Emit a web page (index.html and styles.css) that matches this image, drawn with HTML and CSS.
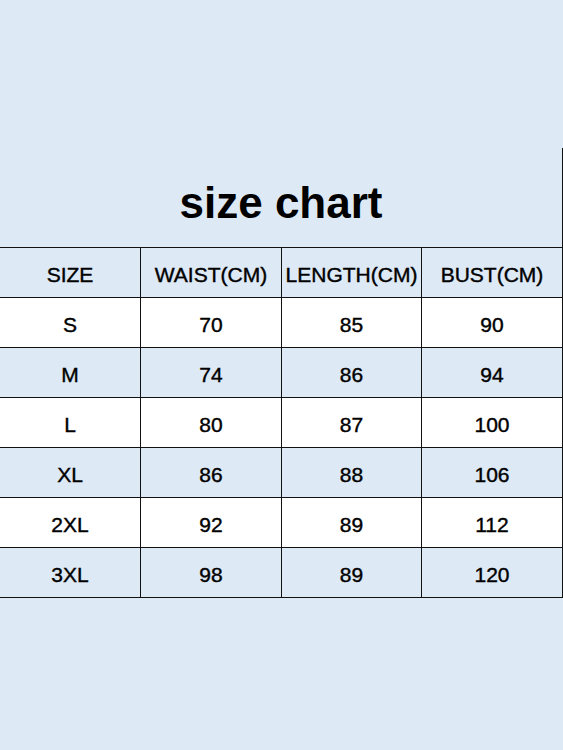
FILE: index.html
```html
<!DOCTYPE html>
<html>
<head>
<meta charset="utf-8">
<link rel="stylesheet" href="styles.css">
</head>
<body>
<div class="page">
  <div class="chart">
    <div class="title">size chart</div>
    <div class="grid">
      <div class="row head"><div>SIZE</div><div>WAIST(CM)</div><div>LENGTH(CM)</div><div>BUST(CM)</div></div>
      <div class="row white"><div>S</div><div>70</div><div>85</div><div>90</div></div>
      <div class="row"><div>M</div><div>74</div><div>86</div><div>94</div></div>
      <div class="row white"><div>L</div><div>80</div><div>87</div><div>100</div></div>
      <div class="row"><div>XL</div><div>86</div><div>88</div><div>106</div></div>
      <div class="row white"><div>2XL</div><div>92</div><div>89</div><div>112</div></div>
      <div class="row"><div>3XL</div><div>98</div><div>89</div><div>120</div></div>
    </div>
  </div>
</div>
</body>
</html>
```
FILE: styles.css
```css
html, body {
  margin: 0;
  padding: 0;
  background: #dde9f5;
}
body {
  width: 563px;
  height: 750px;
  font-family: "Liberation Sans", Arial, sans-serif;
  color: #000;
}
.page {
  padding-top: 148px;
}
.chart {
  width: 563px;
  box-sizing: border-box;
  border-right: 1px solid #111;
}
.title {
  height: 99px;
  display: flex;
  align-items: center;
  justify-content: center;
  font-size: 44px;
  font-weight: bold;
  padding-top: 10px;
  box-sizing: border-box;
}
.grid {
  border-top: 1px solid #111;
}
.row {
  display: grid;
  grid-template-columns: 141px 141px 140px 140px;
  height: 50px;
  box-sizing: border-box;
  border-bottom: 1px solid #111;
}
.row.white {
  background: #ffffff;
}
.row > div {
  display: flex;
  align-items: center;
  justify-content: center;
  font-size: 21px;
  padding-top: 5px;
  -webkit-text-stroke: 0.4px #000;
  border-right: 1px solid #111;
}
.row > div:last-child {
  border-right: none;
}
```
